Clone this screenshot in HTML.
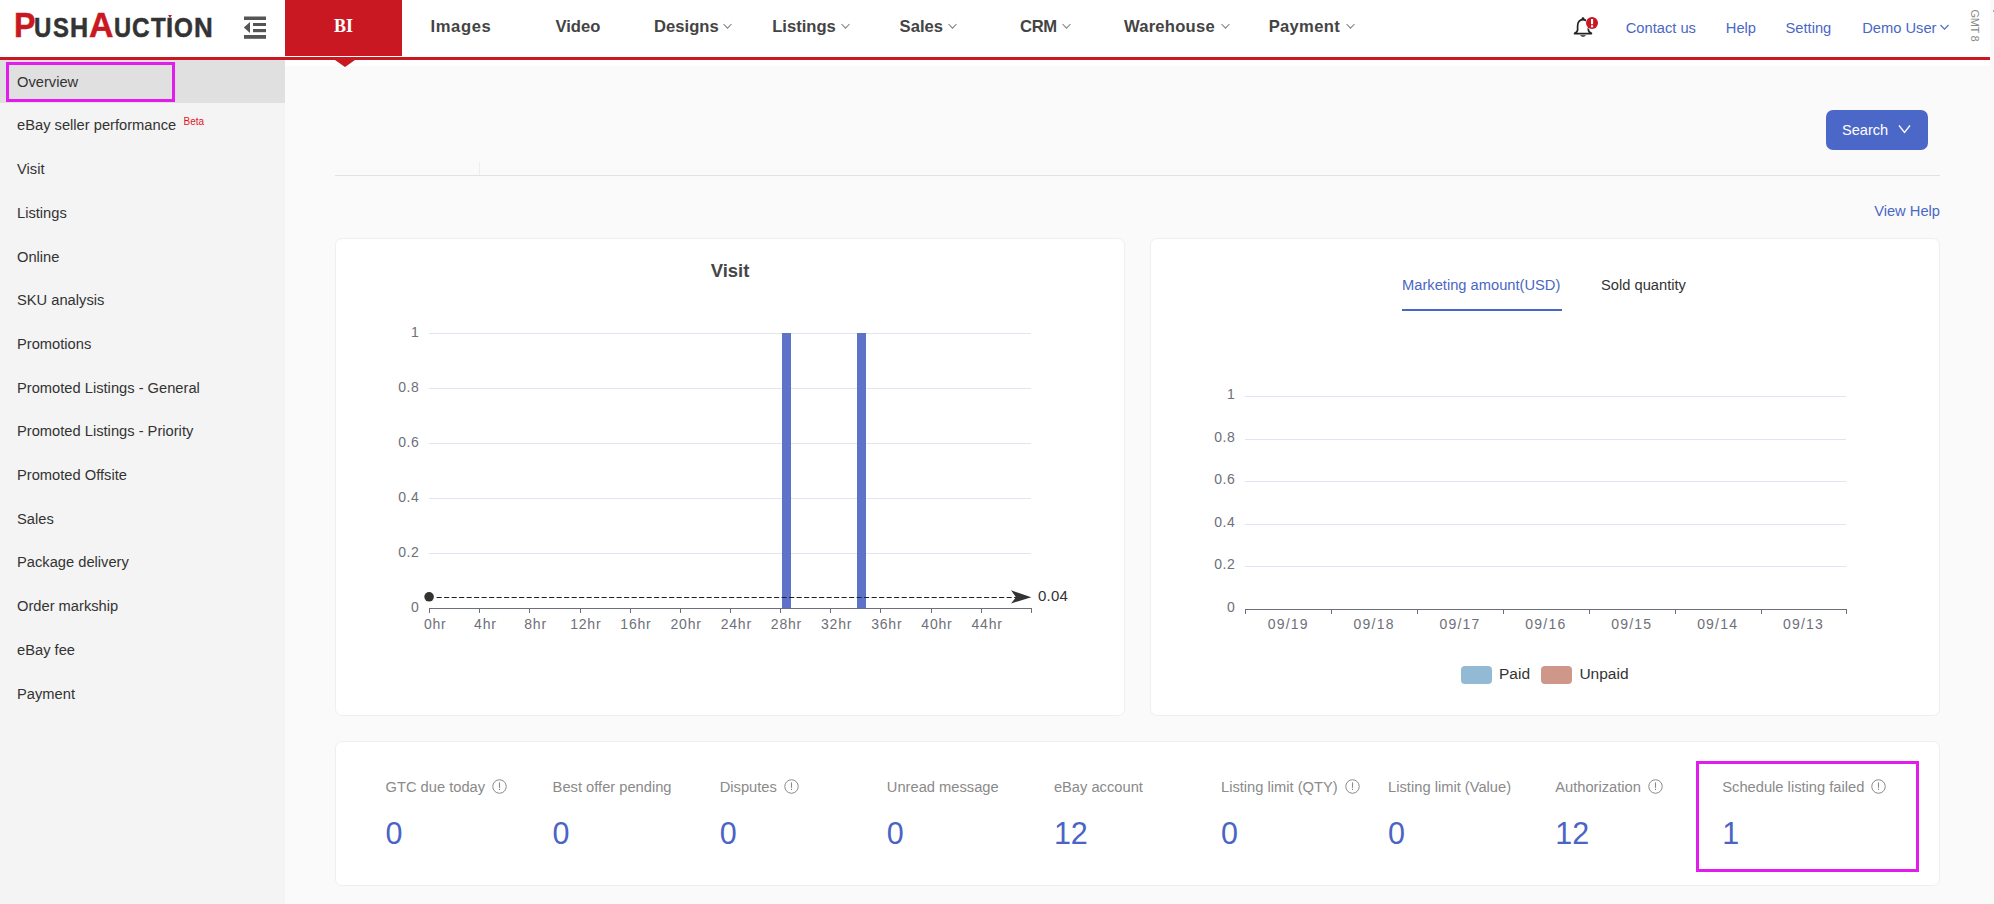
<!DOCTYPE html><html><head><meta charset="utf-8"><style>
html,body{margin:0;padding:0;width:1994px;height:904px;overflow:hidden;background:#fafafa;position:relative;font-family:"Liberation Sans", sans-serif;}
.t{position:absolute;white-space:nowrap;}
</style></head><body>
<div style="position:absolute;left:0px;top:0px;width:1990px;height:57px;background:#fff"></div>
<div style="position:absolute;left:1990px;top:0px;width:4px;height:904px;background:#f9f9f9"></div>
<div style="position:absolute;left:0px;top:57px;width:1990px;height:3px;background:#c91822"></div>
<div style="position:absolute;left:285px;top:0px;width:117px;height:56px;background:#c91822"></div>
<div class="t" style="left:343.5px;transform:translateX(-50%);top:16.92px;font-size:18px;line-height:18px;color:#fff;font-weight:bold;font-family:'Liberation Serif', serif;">BI</div>
<div style="position:absolute;left:285px;top:60px;width:1705px;height:6px;background:#fff"></div>
<div style="position:absolute;left:335px;top:60px;width:0;height:0;border-left:10px solid transparent;border-right:10px solid transparent;border-top:7px solid #c91822"></div>
<div class="t" style="left:13.63px;top:7.75px;font-size:35.5px;line-height:35.5px;color:#c91822;font-weight:bold;font-family:'Liberation Sans', sans-serif;transform:scaleX(0.905);transform-origin:0 0;-webkit-text-stroke:0.5px #c91822">P</div>
<div class="t" style="left:34.18px;top:14.94px;font-size:27px;line-height:27px;color:#333;font-weight:bold;font-family:'Liberation Sans', sans-serif;transform:scaleX(0.889);transform-origin:0 0;-webkit-text-stroke:0.5px #333">U</div>
<div class="t" style="left:53.49px;top:14.94px;font-size:27px;line-height:27px;color:#333;font-weight:bold;font-family:'Liberation Sans', sans-serif;transform:scaleX(0.883);transform-origin:0 0;-webkit-text-stroke:0.5px #333">S</div>
<div class="t" style="left:70.42px;top:14.94px;font-size:27px;line-height:27px;color:#333;font-weight:bold;font-family:'Liberation Sans', sans-serif;transform:scaleX(0.931);transform-origin:0 0;-webkit-text-stroke:0.5px #333">H</div>
<div class="t" style="left:89.14px;top:7.75px;font-size:35.5px;line-height:35.5px;color:#c91822;font-weight:bold;font-family:'Liberation Sans', sans-serif;transform:scaleX(0.954);transform-origin:0 0;-webkit-text-stroke:0.5px #c91822">A</div>
<div class="t" style="left:113.9px;top:14.94px;font-size:27px;line-height:27px;color:#333;font-weight:bold;font-family:'Liberation Sans', sans-serif;transform:scaleX(0.877);transform-origin:0 0;-webkit-text-stroke:0.5px #333">U</div>
<div class="t" style="left:131.71px;top:14.94px;font-size:27px;line-height:27px;color:#333;font-weight:bold;font-family:'Liberation Sans', sans-serif;transform:scaleX(0.898);transform-origin:0 0;-webkit-text-stroke:0.5px #333">C</div>
<div class="t" style="left:150.83px;top:14.94px;font-size:27px;line-height:27px;color:#333;font-weight:bold;font-family:'Liberation Sans', sans-serif;transform:scaleX(0.893);transform-origin:0 0;-webkit-text-stroke:0.5px #333">T</div>
<div class="t" style="left:166.29px;top:14.94px;font-size:27px;line-height:27px;color:#333;font-weight:bold;font-family:'Liberation Sans', sans-serif;transform:scaleX(0.949);transform-origin:0 0;-webkit-text-stroke:0.5px #333">I</div>
<div class="t" style="left:173.81px;top:14.94px;font-size:27px;line-height:27px;color:#333;font-weight:bold;font-family:'Liberation Sans', sans-serif;transform:scaleX(0.899);transform-origin:0 0;-webkit-text-stroke:0.5px #333">O</div>
<div class="t" style="left:194.17px;top:14.94px;font-size:27px;line-height:27px;color:#333;font-weight:bold;font-family:'Liberation Sans', sans-serif;transform:scaleX(0.962);transform-origin:0 0;-webkit-text-stroke:0.5px #333">N</div>
<div style="position:absolute;left:167.5px;top:14.5px;width:0;height:0;border-left:2.5px solid transparent;border-right:2.5px solid transparent;border-top:3px solid #c91822"></div>
<svg style="position:absolute;left:243px;top:15px" width="25" height="25" viewBox="0 0 25 25">
<rect x="1" y="1.5" width="22" height="3.5" fill="#555"/>
<rect x="10" y="8" width="13" height="3" fill="#555"/>
<rect x="10" y="14" width="13" height="3.2" fill="#555"/>
<rect x="1" y="20" width="22" height="3.8" fill="#555"/>
<polygon points="0.8,12.5 7,7 7,18" fill="#555"/>
</svg>
<div class="t" style="left:430.5px;top:18.75px;font-size:16.6px;line-height:16.6px;color:#444;font-weight:bold;font-family:'Liberation Sans', sans-serif;letter-spacing:0.6px">Images</div>
<div class="t" style="left:555.4px;top:18.75px;font-size:16.6px;line-height:16.6px;color:#444;font-weight:bold;font-family:'Liberation Sans', sans-serif;letter-spacing:0px">Video</div>
<div class="t" style="left:654.1px;top:18.75px;font-size:16.6px;line-height:16.6px;color:#444;font-weight:bold;font-family:'Liberation Sans', sans-serif;letter-spacing:0px">Designs</div>
<svg style="position:absolute;left:723.4px;top:23px" width="10" height="7" viewBox="0 0 10 7"><polyline points="0.5,1 4.5,5.2 8.5,1" fill="none" stroke="#808080" stroke-width="1.05"/></svg>
<div class="t" style="left:772.2px;top:18.75px;font-size:16.6px;line-height:16.6px;color:#444;font-weight:bold;font-family:'Liberation Sans', sans-serif;letter-spacing:0px">Listings</div>
<svg style="position:absolute;left:841.3px;top:23px" width="10" height="7" viewBox="0 0 10 7"><polyline points="0.5,1 4.5,5.2 8.5,1" fill="none" stroke="#808080" stroke-width="1.05"/></svg>
<div class="t" style="left:899.6px;top:18.75px;font-size:16.6px;line-height:16.6px;color:#444;font-weight:bold;font-family:'Liberation Sans', sans-serif;letter-spacing:0px">Sales</div>
<svg style="position:absolute;left:947.8px;top:23px" width="10" height="7" viewBox="0 0 10 7"><polyline points="0.5,1 4.5,5.2 8.5,1" fill="none" stroke="#808080" stroke-width="1.05"/></svg>
<div class="t" style="left:1020px;top:18.75px;font-size:16.6px;line-height:16.6px;color:#444;font-weight:bold;font-family:'Liberation Sans', sans-serif;letter-spacing:-0.3px">CRM</div>
<svg style="position:absolute;left:1062px;top:23px" width="10" height="7" viewBox="0 0 10 7"><polyline points="0.5,1 4.5,5.2 8.5,1" fill="none" stroke="#808080" stroke-width="1.05"/></svg>
<div class="t" style="left:1123.9px;top:18.75px;font-size:16.6px;line-height:16.6px;color:#444;font-weight:bold;font-family:'Liberation Sans', sans-serif;letter-spacing:0.25px">Warehouse</div>
<svg style="position:absolute;left:1221px;top:23px" width="10" height="7" viewBox="0 0 10 7"><polyline points="0.5,1 4.5,5.2 8.5,1" fill="none" stroke="#808080" stroke-width="1.05"/></svg>
<div class="t" style="left:1268.7px;top:18.75px;font-size:16.6px;line-height:16.6px;color:#444;font-weight:bold;font-family:'Liberation Sans', sans-serif;letter-spacing:0.3px">Payment</div>
<svg style="position:absolute;left:1345.9px;top:23px" width="10" height="7" viewBox="0 0 10 7"><polyline points="0.5,1 4.5,5.2 8.5,1" fill="none" stroke="#808080" stroke-width="1.05"/></svg>
<svg style="position:absolute;left:1570px;top:14px" width="30" height="26" viewBox="0 0 30 26">
<path d="M13 5.6 C9.2 5.6 7.6 8.6 7.6 12 L7.6 15.8 C7.6 17.4 6.6 18.4 4.6 19.2 L4.6 19.6 L21.4 19.6 L21.4 19.2 C19.4 18.4 18.4 17.4 18.4 15.8 L18.4 12 C18.4 8.6 16.8 5.6 13 5.6 Z" fill="none" stroke="#222" stroke-width="1.7" stroke-linejoin="round"/>
<circle cx="13" cy="4.6" r="1.4" fill="#222"/>
<path d="M10 21.3 Q13 24.3 16 21.3 Z" fill="#222"/>
<circle cx="22" cy="9" r="6.6" fill="#fff"/>
<circle cx="22" cy="9" r="6" fill="#c91822"/>
<rect x="21" y="5" width="2.1" height="5.2" fill="#fff"/>
<rect x="21" y="11.3" width="2.1" height="2" fill="#fff"/>
</svg>
<div class="t" style="left:1625.7px;top:20.76px;font-size:14.7px;line-height:14.7px;color:#4a67c5;font-weight:normal;font-family:'Liberation Sans', sans-serif;">Contact us</div>
<div class="t" style="left:1725.8px;top:20.76px;font-size:14.7px;line-height:14.7px;color:#4a67c5;font-weight:normal;font-family:'Liberation Sans', sans-serif;">Help</div>
<div class="t" style="left:1785.5px;top:20.76px;font-size:14.7px;line-height:14.7px;color:#4a67c5;font-weight:normal;font-family:'Liberation Sans', sans-serif;">Setting</div>
<div class="t" style="left:1862.2px;top:20.76px;font-size:14.7px;line-height:14.7px;color:#4a67c5;font-weight:normal;font-family:'Liberation Sans', sans-serif;">Demo User</div>
<svg style="position:absolute;left:1940px;top:24px" width="10" height="7" viewBox="0 0 10 7"><polyline points="0.5,1 4.5,5.2 8.5,1" fill="none" stroke="#4a67c5" stroke-width="1.1"/></svg>
<div class="t" style="left:1959px;top:18.7px;width:31px;height:12px;font-size:11px;line-height:12px;letter-spacing:-0.3px;color:#888;transform:rotate(90deg);transform-origin:center;text-align:center">GMT 8</div>
<div style="position:absolute;left:1993px;top:10px;width:1px;height:2px;background:#aaa"></div>
<div style="position:absolute;left:0px;top:60px;width:285px;height:844px;background:#f4f4f4"></div>
<div style="position:absolute;left:0px;top:60px;width:285px;height:43px;background:#e0e0e0"></div>
<div class="t" style="left:17px;top:74.66px;font-size:14.7px;line-height:14.7px;color:#333;font-weight:normal;font-family:'Liberation Sans', sans-serif;">Overview</div>
<div class="t" style="left:17px;top:118.37px;font-size:14.7px;line-height:14.7px;color:#333;font-weight:normal;font-family:'Liberation Sans', sans-serif;">eBay seller performance</div>
<div class="t" style="left:17px;top:162.08px;font-size:14.7px;line-height:14.7px;color:#333;font-weight:normal;font-family:'Liberation Sans', sans-serif;">Visit</div>
<div class="t" style="left:17px;top:205.79px;font-size:14.7px;line-height:14.7px;color:#333;font-weight:normal;font-family:'Liberation Sans', sans-serif;">Listings</div>
<div class="t" style="left:17px;top:249.50px;font-size:14.7px;line-height:14.7px;color:#333;font-weight:normal;font-family:'Liberation Sans', sans-serif;">Online</div>
<div class="t" style="left:17px;top:293.21px;font-size:14.7px;line-height:14.7px;color:#333;font-weight:normal;font-family:'Liberation Sans', sans-serif;">SKU analysis</div>
<div class="t" style="left:17px;top:336.92px;font-size:14.7px;line-height:14.7px;color:#333;font-weight:normal;font-family:'Liberation Sans', sans-serif;">Promotions</div>
<div class="t" style="left:17px;top:380.63px;font-size:14.7px;line-height:14.7px;color:#333;font-weight:normal;font-family:'Liberation Sans', sans-serif;">Promoted Listings - General</div>
<div class="t" style="left:17px;top:424.34px;font-size:14.7px;line-height:14.7px;color:#333;font-weight:normal;font-family:'Liberation Sans', sans-serif;">Promoted Listings - Priority</div>
<div class="t" style="left:17px;top:468.05px;font-size:14.7px;line-height:14.7px;color:#333;font-weight:normal;font-family:'Liberation Sans', sans-serif;">Promoted Offsite</div>
<div class="t" style="left:17px;top:511.76px;font-size:14.7px;line-height:14.7px;color:#333;font-weight:normal;font-family:'Liberation Sans', sans-serif;">Sales</div>
<div class="t" style="left:17px;top:555.47px;font-size:14.7px;line-height:14.7px;color:#333;font-weight:normal;font-family:'Liberation Sans', sans-serif;">Package delivery</div>
<div class="t" style="left:17px;top:599.18px;font-size:14.7px;line-height:14.7px;color:#333;font-weight:normal;font-family:'Liberation Sans', sans-serif;">Order markship</div>
<div class="t" style="left:17px;top:642.89px;font-size:14.7px;line-height:14.7px;color:#333;font-weight:normal;font-family:'Liberation Sans', sans-serif;">eBay fee</div>
<div class="t" style="left:17px;top:686.60px;font-size:14.7px;line-height:14.7px;color:#333;font-weight:normal;font-family:'Liberation Sans', sans-serif;">Payment</div>
<div class="t" style="left:183.5px;top:117.03px;font-size:10px;line-height:10px;color:#e0141e;font-weight:normal;font-family:'Liberation Sans', sans-serif;">Beta</div>
<div style="position:absolute;left:6px;top:62px;width:169px;height:40px;box-sizing:border-box;border:3px solid #e21ced"></div>
<div style="position:absolute;left:335px;top:175px;width:1605px;height:1px;background:#e2e2e2"></div>
<div style="position:absolute;left:479px;top:162px;width:1px;height:13px;background:#eeeeee"></div>
<div style="position:absolute;left:1826px;top:110px;width:102px;height:40px;background:#4b68c8;border-radius:7px"></div>
<div class="t" style="left:1842px;top:122.74px;font-size:14.6px;line-height:14.6px;color:#fff;font-weight:normal;font-family:'Liberation Sans', sans-serif;">Search</div>
<svg style="position:absolute;left:1898px;top:124px" width="14" height="10" viewBox="0 0 14 10"><polyline points="1,1.5 6.5,8.5 12,1.5" fill="none" stroke="#fff" stroke-width="1.3"/></svg>
<div class="t" style="right:54px;top:204.06px;font-size:14.7px;line-height:14.7px;color:#4a67c5;font-weight:normal;font-family:'Liberation Sans', sans-serif;">View Help</div>
<div style="position:absolute;left:335px;top:238px;width:790px;height:478px;background:#fff;border:1px solid #efefef;border-radius:7px;box-sizing:border-box"></div>
<div style="position:absolute;left:1150px;top:238px;width:790px;height:478px;background:#fff;border:1px solid #efefef;border-radius:7px;box-sizing:border-box"></div>
<div style="position:absolute;left:335px;top:741px;width:1605px;height:145px;background:#fff;border:1px solid #efefef;border-radius:7px;box-sizing:border-box"></div>
<div class="t" style="left:730px;transform:translateX(-50%);top:262.04px;font-size:18.5px;line-height:18.5px;color:#464646;font-weight:bold;font-family:'Liberation Sans', sans-serif;">Visit</div>
<div class="t" style="right:1574.5px;top:599.55px;font-size:14px;line-height:14px;color:#6e7079;font-weight:normal;font-family:'Liberation Sans', sans-serif;letter-spacing:0.6px">0</div>
<div style="position:absolute;left:429px;top:553px;width:602px;height:1px;background:#e0e6f1"></div>
<div class="t" style="right:1574.5px;top:544.55px;font-size:14px;line-height:14px;color:#6e7079;font-weight:normal;font-family:'Liberation Sans', sans-serif;letter-spacing:0.6px">0.2</div>
<div style="position:absolute;left:429px;top:498px;width:602px;height:1px;background:#e0e6f1"></div>
<div class="t" style="right:1574.5px;top:489.55px;font-size:14px;line-height:14px;color:#6e7079;font-weight:normal;font-family:'Liberation Sans', sans-serif;letter-spacing:0.6px">0.4</div>
<div style="position:absolute;left:429px;top:443px;width:602px;height:1px;background:#e0e6f1"></div>
<div class="t" style="right:1574.5px;top:434.55px;font-size:14px;line-height:14px;color:#6e7079;font-weight:normal;font-family:'Liberation Sans', sans-serif;letter-spacing:0.6px">0.6</div>
<div style="position:absolute;left:429px;top:388px;width:602px;height:1px;background:#e0e6f1"></div>
<div class="t" style="right:1574.5px;top:379.55px;font-size:14px;line-height:14px;color:#6e7079;font-weight:normal;font-family:'Liberation Sans', sans-serif;letter-spacing:0.6px">0.8</div>
<div style="position:absolute;left:429px;top:333px;width:602px;height:1px;background:#e0e6f1"></div>
<div class="t" style="right:1574.5px;top:324.55px;font-size:14px;line-height:14px;color:#6e7079;font-weight:normal;font-family:'Liberation Sans', sans-serif;letter-spacing:0.6px">1</div>
<div style="position:absolute;left:782px;top:333px;width:9px;height:275.5px;background:#5e72c8"></div>
<div style="position:absolute;left:857px;top:333px;width:9px;height:275.5px;background:#5e72c8"></div>
<div style="position:absolute;left:429px;top:608px;width:603px;height:1.3px;background:#6e7079"></div>
<div style="position:absolute;left:429px;top:608px;width:1px;height:5px;background:#6e7079"></div>
<div style="position:absolute;left:479px;top:608px;width:1px;height:5px;background:#6e7079"></div>
<div style="position:absolute;left:529px;top:608px;width:1px;height:5px;background:#6e7079"></div>
<div style="position:absolute;left:580px;top:608px;width:1px;height:5px;background:#6e7079"></div>
<div style="position:absolute;left:630px;top:608px;width:1px;height:5px;background:#6e7079"></div>
<div style="position:absolute;left:680px;top:608px;width:1px;height:5px;background:#6e7079"></div>
<div style="position:absolute;left:730px;top:608px;width:1px;height:5px;background:#6e7079"></div>
<div style="position:absolute;left:780px;top:608px;width:1px;height:5px;background:#6e7079"></div>
<div style="position:absolute;left:830px;top:608px;width:1px;height:5px;background:#6e7079"></div>
<div style="position:absolute;left:880px;top:608px;width:1px;height:5px;background:#6e7079"></div>
<div style="position:absolute;left:931px;top:608px;width:1px;height:5px;background:#6e7079"></div>
<div style="position:absolute;left:981px;top:608px;width:1px;height:5px;background:#6e7079"></div>
<div style="position:absolute;left:1031px;top:608px;width:1px;height:5px;background:#6e7079"></div>
<div class="t" style="left:435.2708333333333px;transform:translateX(-50%);top:616.75px;font-size:14px;line-height:14px;color:#6e7079;font-weight:normal;font-family:'Liberation Sans', sans-serif;letter-spacing:0.8px">0hr</div>
<div class="t" style="left:485.4375px;transform:translateX(-50%);top:616.75px;font-size:14px;line-height:14px;color:#6e7079;font-weight:normal;font-family:'Liberation Sans', sans-serif;letter-spacing:0.8px">4hr</div>
<div class="t" style="left:535.6041666666666px;transform:translateX(-50%);top:616.75px;font-size:14px;line-height:14px;color:#6e7079;font-weight:normal;font-family:'Liberation Sans', sans-serif;letter-spacing:0.8px">8hr</div>
<div class="t" style="left:585.7708333333333px;transform:translateX(-50%);top:616.75px;font-size:14px;line-height:14px;color:#6e7079;font-weight:normal;font-family:'Liberation Sans', sans-serif;letter-spacing:0.8px">12hr</div>
<div class="t" style="left:635.9375px;transform:translateX(-50%);top:616.75px;font-size:14px;line-height:14px;color:#6e7079;font-weight:normal;font-family:'Liberation Sans', sans-serif;letter-spacing:0.8px">16hr</div>
<div class="t" style="left:686.1041666666666px;transform:translateX(-50%);top:616.75px;font-size:14px;line-height:14px;color:#6e7079;font-weight:normal;font-family:'Liberation Sans', sans-serif;letter-spacing:0.8px">20hr</div>
<div class="t" style="left:736.2708333333333px;transform:translateX(-50%);top:616.75px;font-size:14px;line-height:14px;color:#6e7079;font-weight:normal;font-family:'Liberation Sans', sans-serif;letter-spacing:0.8px">24hr</div>
<div class="t" style="left:786.4375px;transform:translateX(-50%);top:616.75px;font-size:14px;line-height:14px;color:#6e7079;font-weight:normal;font-family:'Liberation Sans', sans-serif;letter-spacing:0.8px">28hr</div>
<div class="t" style="left:836.6041666666666px;transform:translateX(-50%);top:616.75px;font-size:14px;line-height:14px;color:#6e7079;font-weight:normal;font-family:'Liberation Sans', sans-serif;letter-spacing:0.8px">32hr</div>
<div class="t" style="left:886.7708333333333px;transform:translateX(-50%);top:616.75px;font-size:14px;line-height:14px;color:#6e7079;font-weight:normal;font-family:'Liberation Sans', sans-serif;letter-spacing:0.8px">36hr</div>
<div class="t" style="left:936.9375px;transform:translateX(-50%);top:616.75px;font-size:14px;line-height:14px;color:#6e7079;font-weight:normal;font-family:'Liberation Sans', sans-serif;letter-spacing:0.8px">40hr</div>
<div class="t" style="left:987.1041666666666px;transform:translateX(-50%);top:616.75px;font-size:14px;line-height:14px;color:#6e7079;font-weight:normal;font-family:'Liberation Sans', sans-serif;letter-spacing:0.8px">44hr</div>
<svg style="position:absolute;left:420px;top:585px" width="620" height="24" viewBox="0 0 620 24">
<line x1="16.6" y1="12.5" x2="598" y2="12.5" stroke="#222" stroke-width="1" stroke-dasharray="5.1,2.4"/>
<circle cx="9.1" cy="11.8" r="4.8" fill="#333"/>
<path d="M591 5.2 L611.3 12.3 L591 18.4 L596 12.3 Z" fill="#333"/>
</svg>
<div class="t" style="left:1038px;top:588.30px;font-size:15px;line-height:15px;color:#333;font-weight:normal;font-family:'Liberation Sans', sans-serif;letter-spacing:0.2px">0.04</div>
<div class="t" style="left:1402px;top:277.86px;font-size:14.7px;line-height:14.7px;color:#4a67c5;font-weight:normal;font-family:'Liberation Sans', sans-serif;">Marketing amount(USD)</div>
<div style="position:absolute;left:1402px;top:309px;width:160px;height:2.4px;background:#4a67c5"></div>
<div class="t" style="left:1601px;top:277.86px;font-size:14.7px;line-height:14.7px;color:#333;font-weight:normal;font-family:'Liberation Sans', sans-serif;">Sold quantity</div>
<div class="t" style="right:758.5px;top:599.85px;font-size:14px;line-height:14px;color:#6e7079;font-weight:normal;font-family:'Liberation Sans', sans-serif;letter-spacing:0.6px">0</div>
<div style="position:absolute;left:1245.3px;top:566px;width:601.2px;height:1px;background:#e0e6f1"></div>
<div class="t" style="right:758.5px;top:557.35px;font-size:14px;line-height:14px;color:#6e7079;font-weight:normal;font-family:'Liberation Sans', sans-serif;letter-spacing:0.6px">0.2</div>
<div style="position:absolute;left:1245.3px;top:524px;width:601.2px;height:1px;background:#e0e6f1"></div>
<div class="t" style="right:758.5px;top:514.85px;font-size:14px;line-height:14px;color:#6e7079;font-weight:normal;font-family:'Liberation Sans', sans-serif;letter-spacing:0.6px">0.4</div>
<div style="position:absolute;left:1245.3px;top:481px;width:601.2px;height:1px;background:#e0e6f1"></div>
<div class="t" style="right:758.5px;top:472.35px;font-size:14px;line-height:14px;color:#6e7079;font-weight:normal;font-family:'Liberation Sans', sans-serif;letter-spacing:0.6px">0.6</div>
<div style="position:absolute;left:1245.3px;top:439px;width:601.2px;height:1px;background:#e0e6f1"></div>
<div class="t" style="right:758.5px;top:429.85px;font-size:14px;line-height:14px;color:#6e7079;font-weight:normal;font-family:'Liberation Sans', sans-serif;letter-spacing:0.6px">0.8</div>
<div style="position:absolute;left:1245.3px;top:396px;width:601.2px;height:1px;background:#e0e6f1"></div>
<div class="t" style="right:758.5px;top:387.35px;font-size:14px;line-height:14px;color:#6e7079;font-weight:normal;font-family:'Liberation Sans', sans-serif;letter-spacing:0.6px">1</div>
<div style="position:absolute;left:1245.3px;top:608.6px;width:602.2px;height:1.3px;background:#6e7079"></div>
<div style="position:absolute;left:1245px;top:609px;width:1px;height:5px;background:#6e7079"></div>
<div style="position:absolute;left:1331px;top:609px;width:1px;height:5px;background:#6e7079"></div>
<div style="position:absolute;left:1417px;top:609px;width:1px;height:5px;background:#6e7079"></div>
<div style="position:absolute;left:1503px;top:609px;width:1px;height:5px;background:#6e7079"></div>
<div style="position:absolute;left:1589px;top:609px;width:1px;height:5px;background:#6e7079"></div>
<div style="position:absolute;left:1675px;top:609px;width:1px;height:5px;background:#6e7079"></div>
<div style="position:absolute;left:1761px;top:609px;width:1px;height:5px;background:#6e7079"></div>
<div style="position:absolute;left:1846px;top:609px;width:1px;height:5px;background:#6e7079"></div>
<div class="t" style="left:1288.242857142857px;transform:translateX(-50%);top:617.35px;font-size:14px;line-height:14px;color:#6e7079;font-weight:normal;font-family:'Liberation Sans', sans-serif;letter-spacing:1.2px">09/19</div>
<div class="t" style="left:1374.1285714285714px;transform:translateX(-50%);top:617.35px;font-size:14px;line-height:14px;color:#6e7079;font-weight:normal;font-family:'Liberation Sans', sans-serif;letter-spacing:1.2px">09/18</div>
<div class="t" style="left:1460.0142857142857px;transform:translateX(-50%);top:617.35px;font-size:14px;line-height:14px;color:#6e7079;font-weight:normal;font-family:'Liberation Sans', sans-serif;letter-spacing:1.2px">09/17</div>
<div class="t" style="left:1545.9px;transform:translateX(-50%);top:617.35px;font-size:14px;line-height:14px;color:#6e7079;font-weight:normal;font-family:'Liberation Sans', sans-serif;letter-spacing:1.2px">09/16</div>
<div class="t" style="left:1631.7857142857142px;transform:translateX(-50%);top:617.35px;font-size:14px;line-height:14px;color:#6e7079;font-weight:normal;font-family:'Liberation Sans', sans-serif;letter-spacing:1.2px">09/15</div>
<div class="t" style="left:1717.6714285714286px;transform:translateX(-50%);top:617.35px;font-size:14px;line-height:14px;color:#6e7079;font-weight:normal;font-family:'Liberation Sans', sans-serif;letter-spacing:1.2px">09/14</div>
<div class="t" style="left:1803.557142857143px;transform:translateX(-50%);top:617.35px;font-size:14px;line-height:14px;color:#6e7079;font-weight:normal;font-family:'Liberation Sans', sans-serif;letter-spacing:1.2px">09/13</div>
<div style="position:absolute;left:1461px;top:666px;width:31px;height:17.5px;background:#93bad4;border-radius:4px"></div>
<div class="t" style="left:1499px;top:665.98px;font-size:15.5px;line-height:15.5px;color:#333;font-weight:normal;font-family:'Liberation Sans', sans-serif;">Paid</div>
<div style="position:absolute;left:1541px;top:666px;width:31px;height:17.5px;background:#cf978a;border-radius:4px"></div>
<div class="t" style="left:1579.4px;top:665.98px;font-size:15.5px;line-height:15.5px;color:#333;font-weight:normal;font-family:'Liberation Sans', sans-serif;">Unpaid</div>
<div class="t" style="left:385.5px;top:780.36px;font-size:14.7px;line-height:14.7px;color:#8a8a8a;font-weight:normal;font-family:'Liberation Sans', sans-serif;">GTC due today</div>
<span class="t" style="left:385.5px;top:780.36px;font-size:14.7px;line-height:14.7px;color:transparent">GTC due today<svg style="margin-left:7px;vertical-align:-1px;position:relative;top:-1.7px" width="15" height="15" viewBox="0 0 15 15"><circle cx="7.5" cy="7.5" r="6.75" fill="none" stroke="#8a8a8a" stroke-width="1"/><rect x="6.95" y="3.4" width="1.1" height="5.4" fill="#8a8a8a"/><rect x="6.95" y="9.7" width="1.1" height="1.3" fill="#8a8a8a"/></svg></span>
<div class="t" style="left:385.5px;top:818.48px;font-size:30.5px;line-height:30.5px;color:#4a64c6;font-weight:normal;font-family:'Liberation Sans', sans-serif;">0</div>
<div class="t" style="left:552.6px;top:780.36px;font-size:14.7px;line-height:14.7px;color:#8a8a8a;font-weight:normal;font-family:'Liberation Sans', sans-serif;">Best offer pending</div>
<div class="t" style="left:552.6px;top:818.48px;font-size:30.5px;line-height:30.5px;color:#4a64c6;font-weight:normal;font-family:'Liberation Sans', sans-serif;">0</div>
<div class="t" style="left:719.7px;top:780.36px;font-size:14.7px;line-height:14.7px;color:#8a8a8a;font-weight:normal;font-family:'Liberation Sans', sans-serif;">Disputes</div>
<span class="t" style="left:719.7px;top:780.36px;font-size:14.7px;line-height:14.7px;color:transparent">Disputes<svg style="margin-left:7px;vertical-align:-1px;position:relative;top:-1.7px" width="15" height="15" viewBox="0 0 15 15"><circle cx="7.5" cy="7.5" r="6.75" fill="none" stroke="#8a8a8a" stroke-width="1"/><rect x="6.95" y="3.4" width="1.1" height="5.4" fill="#8a8a8a"/><rect x="6.95" y="9.7" width="1.1" height="1.3" fill="#8a8a8a"/></svg></span>
<div class="t" style="left:719.7px;top:818.48px;font-size:30.5px;line-height:30.5px;color:#4a64c6;font-weight:normal;font-family:'Liberation Sans', sans-serif;">0</div>
<div class="t" style="left:886.8px;top:780.36px;font-size:14.7px;line-height:14.7px;color:#8a8a8a;font-weight:normal;font-family:'Liberation Sans', sans-serif;">Unread message</div>
<div class="t" style="left:886.8px;top:818.48px;font-size:30.5px;line-height:30.5px;color:#4a64c6;font-weight:normal;font-family:'Liberation Sans', sans-serif;">0</div>
<div class="t" style="left:1053.9px;top:780.36px;font-size:14.7px;line-height:14.7px;color:#8a8a8a;font-weight:normal;font-family:'Liberation Sans', sans-serif;">eBay account</div>
<div class="t" style="left:1053.9px;top:818.48px;font-size:30.5px;line-height:30.5px;color:#4a64c6;font-weight:normal;font-family:'Liberation Sans', sans-serif;">12</div>
<div class="t" style="left:1221.0px;top:780.36px;font-size:14.7px;line-height:14.7px;color:#8a8a8a;font-weight:normal;font-family:'Liberation Sans', sans-serif;">Listing limit (QTY)</div>
<span class="t" style="left:1221.0px;top:780.36px;font-size:14.7px;line-height:14.7px;color:transparent">Listing limit (QTY)<svg style="margin-left:7px;vertical-align:-1px;position:relative;top:-1.7px" width="15" height="15" viewBox="0 0 15 15"><circle cx="7.5" cy="7.5" r="6.75" fill="none" stroke="#8a8a8a" stroke-width="1"/><rect x="6.95" y="3.4" width="1.1" height="5.4" fill="#8a8a8a"/><rect x="6.95" y="9.7" width="1.1" height="1.3" fill="#8a8a8a"/></svg></span>
<div class="t" style="left:1221.0px;top:818.48px;font-size:30.5px;line-height:30.5px;color:#4a64c6;font-weight:normal;font-family:'Liberation Sans', sans-serif;">0</div>
<div class="t" style="left:1388.1px;top:780.36px;font-size:14.7px;line-height:14.7px;color:#8a8a8a;font-weight:normal;font-family:'Liberation Sans', sans-serif;">Listing limit (Value)</div>
<div class="t" style="left:1388.1px;top:818.48px;font-size:30.5px;line-height:30.5px;color:#4a64c6;font-weight:normal;font-family:'Liberation Sans', sans-serif;">0</div>
<div class="t" style="left:1555.2px;top:780.36px;font-size:14.7px;line-height:14.7px;color:#8a8a8a;font-weight:normal;font-family:'Liberation Sans', sans-serif;">Authorization</div>
<span class="t" style="left:1555.2px;top:780.36px;font-size:14.7px;line-height:14.7px;color:transparent">Authorization<svg style="margin-left:7px;vertical-align:-1px;position:relative;top:-1.7px" width="15" height="15" viewBox="0 0 15 15"><circle cx="7.5" cy="7.5" r="6.75" fill="none" stroke="#8a8a8a" stroke-width="1"/><rect x="6.95" y="3.4" width="1.1" height="5.4" fill="#8a8a8a"/><rect x="6.95" y="9.7" width="1.1" height="1.3" fill="#8a8a8a"/></svg></span>
<div class="t" style="left:1555.2px;top:818.48px;font-size:30.5px;line-height:30.5px;color:#4a64c6;font-weight:normal;font-family:'Liberation Sans', sans-serif;">12</div>
<div class="t" style="left:1722.3px;top:780.36px;font-size:14.7px;line-height:14.7px;color:#8a8a8a;font-weight:normal;font-family:'Liberation Sans', sans-serif;">Schedule listing failed</div>
<span class="t" style="left:1722.3px;top:780.36px;font-size:14.7px;line-height:14.7px;color:transparent">Schedule listing failed<svg style="margin-left:7px;vertical-align:-1px;position:relative;top:-1.7px" width="15" height="15" viewBox="0 0 15 15"><circle cx="7.5" cy="7.5" r="6.75" fill="none" stroke="#8a8a8a" stroke-width="1"/><rect x="6.95" y="3.4" width="1.1" height="5.4" fill="#8a8a8a"/><rect x="6.95" y="9.7" width="1.1" height="1.3" fill="#8a8a8a"/></svg></span>
<div class="t" style="left:1722.3px;top:818.48px;font-size:30.5px;line-height:30.5px;color:#4a64c6;font-weight:normal;font-family:'Liberation Sans', sans-serif;">1</div>
<div style="position:absolute;left:1696px;top:761px;width:223px;height:111px;box-sizing:border-box;border:3px solid #e21ced"></div>
</body></html>
